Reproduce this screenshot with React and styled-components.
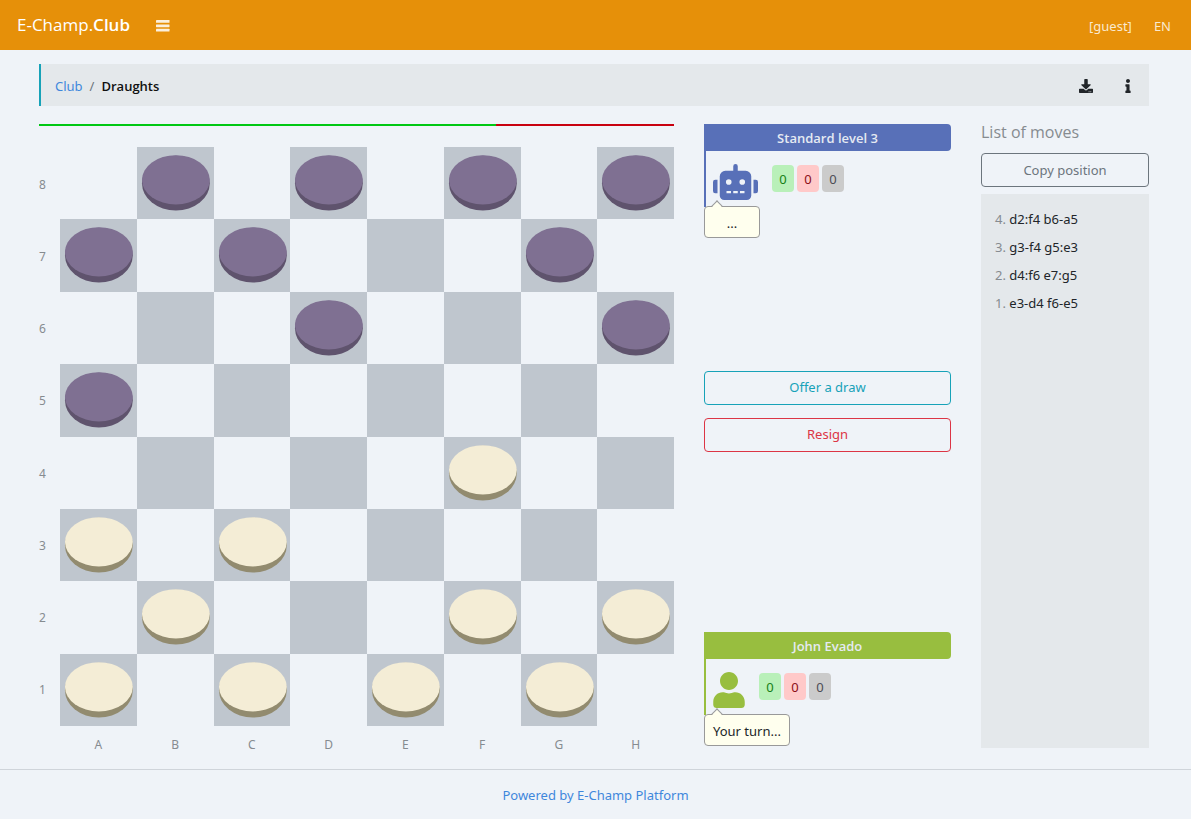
import React from 'react';
import styled, { createGlobalStyle } from 'styled-components';
import { FaDownload, FaInfo, FaRobot, FaUser } from 'react-icons/fa';

const GlobalStyle = createGlobalStyle`
  *, *::before, *::after { box-sizing: border-box; }
  body {
    margin: 0;
    background: #eff3f8;
    color: #212529;
    font: 13px/21px "Noto Sans", "Open Sans", sans-serif;
  }
  button { font: inherit; cursor: pointer; }
`;

const TopBar = styled.header`
  display: flex;
  align-items: center;
  height: 50px;
  padding: 0 20px 1px 17px;
  background: #e69009;
  color: #fff;
`;

const Brand = styled.a`
  color: inherit;
  font-family: "Open Sans", sans-serif;
  font-size: 17px;
  text-decoration: none;

  b { font-weight: 600; }
`;

const IconButton = styled.button`
  display: flex;
  align-items: center;
  justify-content: center;
  width: 42px;
  height: 42px;
  padding: 0;
  border: 0;
  background: none;
  color: inherit;
  font-size: 14px;
`;

const MenuButton = styled(IconButton)`
  margin-left: 12px;
  color: #fbefdd;
`;

const UserNav = styled.nav`
  display: flex;
  gap: 22px;
  margin-left: auto;
  padding-top: 3px;
`;

const NavLink = styled.a`
  color: #fae9ce;
  text-decoration: none;
`;

const Page = styled.main`
  padding: 14px 42px 21px 39px;
`;

const PathBar = styled.div`
  display: flex;
  align-items: center;
  height: 42px;
  padding: 2px 0 0 14px;
  border-left: 2px solid #17a2b8;
  background: #e4e8eb;
`;

const Crumbs = styled.nav`
  display: flex;
  gap: 7px;
  margin-right: auto;
  color: #6c757d;
`;

const Link = styled.a`
  color: #3f87dc;
  text-decoration: none;
`;

const Current = styled.span`
  color: #111;
  font-family: "Open Sans", sans-serif;
  font-weight: 600;
`;

const Columns = styled.div`
  display: grid;
  grid-template-columns: 635fr 247fr 168fr;
  gap: 30px;
  margin-top: 18px;
`;

const TimeBar = styled.div`
  display: flex;
  height: 2px;
  margin-bottom: 21px;
  background: #c8000f;
`;

const TimeLeft = styled.div`
  width: 72%;
  background: #00c814;
`;

const BoardGrid = styled.div`
  display: grid;
  grid-template-columns: 21px 1fr;
  margin-bottom: -7px;
  color: #868b90;
  font-size: 12px;
`;

const Ranks = styled.div`
  display: grid;
  grid-template-rows: repeat(8, 1fr);
  align-items: center;
  padding-top: 1px;
`;

const Files = styled.div`
  display: grid;
  grid-column: 2;
  grid-template-columns: repeat(8, 1fr);
  padding-top: 8px;
  text-align: center;
`;

const Squares = styled.div`
  display: grid;
  grid-template: repeat(8, 1fr) / repeat(8, 1fr);
  aspect-ratio: 614 / 579;
`;

const Square = styled.div`
  display: flex;
  align-items: center;
  justify-content: center;
  min-height: 0;
  background: ${(p) => (p.$dark ? '#bfc6ce' : 'transparent')};

  svg { display: block; width: 100%; height: 100%; }
`;

const SidePanel = styled.div`
  display: flex;
  flex-direction: column;
  justify-content: space-between;
  padding-bottom: 2px;
`;

const PlayerName = styled.h2`
  margin: 0;
  padding: 4px 0 2px;
  border-radius: 0 4px 4px 0;
  background: ${(p) => p.$color};
  color: #e5eaf2;
  font-family: "Open Sans", sans-serif;
  font-size: 13px;
  font-weight: 600;
  line-height: 21px;
  text-align: center;
`;

const PlayerBody = styled.div`
  display: flex;
  align-items: flex-start;
  gap: 14px;
  height: 56px;
  padding: 13px 7px 0;
  border-left: 2px solid ${(p) => p.$color};
  color: ${(p) => p.$color};
`;

const Avatar = styled.div`
  flex: none;
  width: ${(p) => p.$width};
  height: 36px;

  svg { display: block; width: 100%; height: 100%; }
`;

const Scores = styled.div`
  display: flex;
  gap: 3px;
  padding-top: 1px;
`;

const tones = {
  win: ['#b9f0b9', '#178017'],
  loss: ['#ffc9c9', '#8b1018'],
  draw: ['#cbcbcb', '#4d4d55'],
};

const Score = styled.span`
  width: 22px;
  padding-top: 2px;
  border-radius: 4px;
  background: ${(p) => tones[p.$tone][0]};
  color: ${(p) => tones[p.$tone][1]};
  line-height: 25px;
  text-align: center;
`;

const Bubble = styled.div`
  position: relative;
  width: fit-content;
  min-width: 56px;
  margin-top: -1px;
  padding: 6px 8px 3px;
  border: 1px solid #999;
  border-radius: 4px;
  background: #ffffee;
  text-align: center;

  &::before {
    content: '';
    position: absolute;
    top: -5px;
    left: 8px;
    width: 8px;
    height: 8px;
    border: solid #999;
    border-width: 1px 0 0 1px;
    background: linear-gradient(135deg, #ffffee 60%, transparent 60%);
    transform: rotate(45deg);
  }
`;

const Actions = styled.div`
  display: flex;
  flex-direction: column;
  gap: 13px;
  margin-bottom: 48px;
`;

const OutlineButton = styled.button`
  width: 100%;
  height: 34px;
  padding: 0;
  border: 1px solid ${(p) => p.$color};
  border-radius: 4px;
  background: transparent;
  color: ${(p) => p.$color};
`;

const MovesPanel = styled.section`
  display: flex;
  flex-direction: column;
`;

const MovesTitle = styled.h2`
  margin: -3px 0 9px;
  color: #868b90;
  font-family: "Open Sans", sans-serif;
  font-size: 16px;
  font-weight: 400;
  line-height: 23px;
`;

const Moves = styled.ol`
  flex: 1;
  margin: 7px 0 0;
  padding: 11px 14px;
  background: #e4e8eb;
  line-height: 28px;
  list-style: none;
`;

const MoveNumber = styled.span`
  color: #868b90;
`;

const Footer = styled.footer`
  padding: 15px 0 13px;
  border-top: 1px solid #cfd4da;
  text-align: center;
`;

const rows = [
  '.b.b.b.b',
  'b.b...b.',
  '...b...b',
  'b.......',
  '.....w..',
  'w.w.....',
  '.w...w.w',
  'w.w.w.w.',
];

const pieceColors = {
  b: { top: '#7f7092', side: '#5f536d' },
  w: { top: '#f4edd6', side: '#928b6f' },
};

const moves = [
  [4, 'd2:f4 b6-a5'],
  [3, 'g3-f4 g5:e3'],
  [2, 'd4:f6 e7:g5'],
  [1, 'e3-d4 f6-e5'],
];

function BarsIcon() {
  return (
    <svg width="14" height="14" viewBox="0 0 14 14" fill="currentColor" aria-hidden="true">
      <rect y="2" width="13.5" height="2.8" rx="0.4" />
      <rect y="6.4" width="13.5" height="2.8" rx="0.4" />
      <rect y="10.8" width="13.5" height="2.8" rx="0.4" />
    </svg>
  );
}

function Piece({ kind }) {
  const { top, side } = pieceColors[kind];
  return (
    <svg viewBox="0 0 77 72" aria-hidden="true">
      <ellipse cx="39" cy="36" rx="34" ry="27.5" fill={side} />
      <ellipse cx="39" cy="32.6" rx="34" ry="24.7" fill={top} />
    </svg>
  );
}

function Player({ name, color, icon, iconWidth, message }) {
  return (
    <section>
      <PlayerName $color={color}>{name}</PlayerName>
      <PlayerBody $color={color}>
        <Avatar $width={iconWidth}>{icon}</Avatar>
        <Scores>
          <Score $tone="win">0</Score>
          <Score $tone="loss">0</Score>
          <Score $tone="draw">0</Score>
        </Scores>
      </PlayerBody>
      <Bubble>{message}</Bubble>
    </section>
  );
}

export default function App() {
  return (
    <>
      <GlobalStyle />
      <TopBar>
        <Brand href="#">E-Champ.<b>Club</b></Brand>
        <MenuButton aria-label="Menu"><BarsIcon /></MenuButton>
        <UserNav>
          <NavLink href="#">[guest]</NavLink>
          <NavLink href="#">EN</NavLink>
        </UserNav>
      </TopBar>
      <Page>
        <PathBar>
          <Crumbs>
            <Link href="#">Club</Link>
            <span>/</span>
            <Current>Draughts</Current>
          </Crumbs>
          <IconButton aria-label="Download"><FaDownload /></IconButton>
          <IconButton aria-label="Information"><FaInfo /></IconButton>
        </PathBar>
        <Columns>
          <section>
            <TimeBar><TimeLeft /></TimeBar>
            <BoardGrid>
              <Ranks>
                {[8, 7, 6, 5, 4, 3, 2, 1].map((n) => <span key={n}>{n}</span>)}
              </Ranks>
              <Squares>
                {rows.flatMap((row, y) => [...row].map((cell, x) => (
                  <Square key={`${x}-${y}`} $dark={(x + y) % 2 === 1}>
                    {cell !== '.' && <Piece kind={cell} />}
                  </Square>
                )))}
              </Squares>
              <Files>
                {[...'ABCDEFGH'].map((c) => <span key={c}>{c}</span>)}
              </Files>
            </BoardGrid>
          </section>
          <SidePanel>
            <Player
              name="Standard level 3"
              color="#5870b8"
              icon={<FaRobot />}
              iconWidth="45px"
              message="..."
            />
            <Actions>
              <OutlineButton $color="#17a2b8">Offer a draw</OutlineButton>
              <OutlineButton $color="#dc3545">Resign</OutlineButton>
            </Actions>
            <Player
              name="John Evado"
              color="#98be3f"
              icon={<FaUser />}
              iconWidth="32px"
              message="Your turn..."
            />
          </SidePanel>
          <MovesPanel>
            <MovesTitle>List of moves</MovesTitle>
            <OutlineButton $color="#6c757d">Copy position</OutlineButton>
            <Moves>
              {moves.map(([n, text]) => (
                <li key={n}><MoveNumber>{n}.</MoveNumber> {text}</li>
              ))}
            </Moves>
          </MovesPanel>
        </Columns>
      </Page>
      <Footer>
        <Link href="#">Powered by E-Champ Platform</Link>
      </Footer>
    </>
  );
}
